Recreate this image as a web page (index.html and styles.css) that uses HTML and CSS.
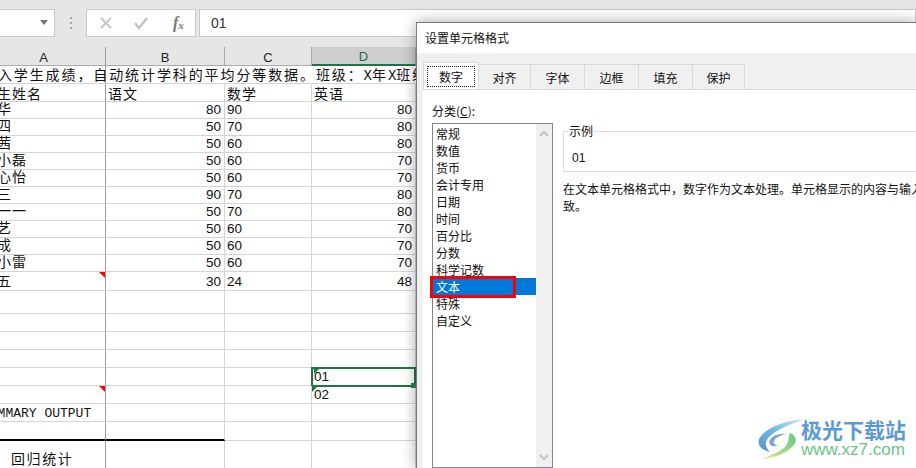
FILE: index.html
```html
<!DOCTYPE html>
<html>
<head>
    <title>设置单元格格式</title>
    <link rel="stylesheet" href="styles.css">
</head>
<body>
    <div class="toolbar">
        <div class="name-box"><span class="arrow"></span></div>
        <div class="grip"><i></i><i></i><i></i></div>
        <div class="fx-box">
            <svg class="tool-icon" width="14" height="14" viewBox="0 0 14 14"><path d="M2 2 L12 12 M12 2 L2 12" stroke="#c6c6c6" stroke-width="2" fill="none"/></svg>
            <svg class="tool-icon" width="16" height="14" viewBox="0 0 16 14"><path d="M2 7 L6 12 L14 2" stroke="#c6c6c6" stroke-width="2.6" fill="none"/></svg>
            <span class="fx">f<sub>x</sub></span>
        </div>
        <div class="formula">01</div>
    </div>

    <table class="sheet">
        <colgroup>
            <col class="col-a">
            <col class="col-b">
            <col class="col-c">
            <col class="col-d">
            <col class="col-e">
        </colgroup>
        <tr class="heads">
            <th class="first">A</th><th>B</th><th>C</th><th class="current">D</th><th></th>
        </tr>
        <tr class="h18">
            <td class="first title"><span>输入学生成绩，自动统计学科的平均分等数据。班级：<span class="tight">X</span>年<span class="tight">X</span>班级</span></td><td class="nob"></td><td class="nob"></td><td class="nob"></td><td></td>
        </tr>
        <tr class="h18"><td class="first">学生姓名</td><td>语文</td><td>数学</td><td>英语</td><td></td></tr>
        <tr class="h17"><td class="first">小华</td><td class="num">80</td><td class="int">90</td><td class="num">80</td><td></td></tr>
        <tr class="h17"><td class="first">李四</td><td class="num">50</td><td class="int">70</td><td class="num">80</td><td></td></tr>
        <tr class="h17"><td class="first">小茜</td><td class="num">50</td><td class="int">60</td><td class="num">80</td><td></td></tr>
        <tr class="h17"><td class="first">王小磊</td><td class="num">50</td><td class="int">60</td><td class="num">70</td><td></td></tr>
        <tr class="h17"><td class="first">李心怡</td><td class="num">50</td><td class="int">60</td><td class="num">70</td><td></td></tr>
        <tr class="h17"><td class="first">张三</td><td class="num">90</td><td class="int">70</td><td class="num">80</td><td></td></tr>
        <tr class="h17"><td class="first">王一一</td><td class="num">50</td><td class="int">70</td><td class="num">80</td><td></td></tr>
        <tr class="h17"><td class="first">小艺</td><td class="num">50</td><td class="int">60</td><td class="num">70</td><td></td></tr>
        <tr class="h17"><td class="first">小成</td><td class="num">50</td><td class="int">60</td><td class="num">70</td><td></td></tr>
        <tr class="h17"><td class="first">王小雷</td><td class="num">50</td><td class="int">60</td><td class="num">70</td><td></td></tr>
        <tr class="h19"><td class="first flag">王五</td><td class="num">30</td><td class="int">24</td><td class="num">48</td><td></td></tr>
        <tr class="h23"><td class="first"></td><td></td><td></td><td></td><td></td></tr>
        <tr class="h18"><td class="first"></td><td></td><td></td><td></td><td></td></tr>
        <tr class="h18"><td class="first"></td><td></td><td></td><td></td><td></td></tr>
        <tr class="h18"><td class="first"></td><td></td><td></td><td></td><td></td></tr>
        <tr class="h18"><td class="first"></td><td></td><td></td><td class="active mark">01<span class="handle"></span></td><td></td></tr>
        <tr class="h18"><td class="first flag"></td><td></td><td></td><td class="mark">02</td><td></td></tr>
        <tr class="h18"><td class="first summary">SUMMARY OUTPUT</td><td></td><td></td><td></td><td></td></tr>
        <tr class="h19"><td class="first thick"></td><td class="thick"></td><td></td><td></td><td></td></tr>
        <tr class="h29"><td class="first indent">回归统计</td><td></td><td></td><td></td><td></td></tr>
    </table>

    <div class="dialog">
        <div class="dialog-title">设置单元格格式</div>
        <div class="tabs">
            <div class="tab on"><span>数字</span></div>
            <div class="tab narrow">对齐</div>
            <div class="tab">字体</div>
            <div class="tab">边框</div>
            <div class="tab">填充</div>
            <div class="tab narrow">保护</div>
        </div>
        <div class="page">
            <div class="left-col">
                <div class="list-label">分类(<u>C</u>):</div>
                <div class="listbox">
                    <ul class="items">
                        <li>常规</li>
                        <li>数值</li>
                        <li>货币</li>
                        <li>会计专用</li>
                        <li>日期</li>
                        <li>时间</li>
                        <li>百分比</li>
                        <li>分数</li>
                        <li>科学记数</li>
                        <li class="selected">文本</li>
                        <li>特殊</li>
                        <li>自定义</li>
                    </ul>
                    <div class="scrollbar">
                        <svg width="10" height="8" viewBox="0 0 10 8"><path d="M1 6 L5 2 L9 6" stroke="#c4c4c4" stroke-width="2" fill="none"/></svg>
                        <svg width="10" height="8" viewBox="0 0 10 8"><path d="M1 2 L5 6 L9 2" stroke="#c4c4c4" stroke-width="2" fill="none"/></svg>
                    </div>
                    <div class="red-box"></div>
                </div>
            </div>
            <div class="right-col">
                <fieldset class="sample">
                    <legend>示例</legend>
                    <div class="sample-value">01</div>
                </fieldset>
                <p class="desc">在文本单元格格式中，数字作为文本处理。单元格显示的内容与输入的内容完全一致。</p>
            </div>
        </div>
    </div>

    <div class="watermark">
        <svg class="wm-logo" width="60" height="55" viewBox="0 0 180 165">
            <defs>
                <linearGradient id="wmBlue" x1="1" y1="0" x2="0" y2="1">
                    <stop offset="0" stop-color="#dcecf8"/>
                    <stop offset="0.5" stop-color="#6db9e8"/>
                    <stop offset="1" stop-color="#5a92c8"/>
                </linearGradient>
                <linearGradient id="wmGreen" x1="1" y1="0" x2="0" y2="1">
                    <stop offset="0" stop-color="#62c98c"/>
                    <stop offset="0.6" stop-color="#a4dc80"/>
                    <stop offset="1" stop-color="#f2ec9a"/>
                </linearGradient>
            </defs>
            <path d="M165 27 C110 30 50 50 28 85 C20 105 35 122 60 125 C45 112 42 95 60 78 C85 55 130 40 165 27Z" fill="url(#wmBlue)"/>
            <path d="M120 68 C140 78 145 95 125 112 C100 135 65 145 35 147 C75 130 105 120 112 100 C118 88 115 78 120 68Z" fill="url(#wmGreen)"/>
            <path d="M108 72 C85 68 60 80 58 95 C57 108 72 112 85 105 C75 105 68 100 72 92 C78 82 95 75 108 72Z" fill="#7fa6c9"/>
        </svg>
        <div class="wm-text">
            <div class="wm-name">极光下载站</div>
            <div class="wm-url">www.xz7.com</div>
        </div>
    </div>
</body>
</html>
```

FILE: styles.css
```css
html, body {
    margin: 0;
    padding: 0;
    height: 468px;
    overflow: hidden;
    background: #fff;
    color: #111;
    font-family: "Noto Sans CJK SC", "Liberation Sans", sans-serif;
    font-size: 12px;
}

body {
    position: relative;
    width: 916px;
}

/* formula bar */
.toolbar {
    display: flex;
    align-items: center;
    height: 47px;
    padding-bottom: 2px;
    box-sizing: border-box;
    background: #e6e6e6;
}

.name-box {
    display: flex;
    align-items: center;
    justify-content: flex-end;
    width: 55px;
    height: 28px;
    padding-right: 6px;
    box-sizing: border-box;
    background: #fff;
    border: 1px solid #c8c8c8;
    border-left: none;
}

.arrow {
    border-left: 4px solid transparent;
    border-right: 4px solid transparent;
    border-top: 5px solid #777;
}

.grip {
    display: flex;
    flex-direction: column;
    gap: 3px;
    margin: 0 14px 0 15px;
}

.grip i {
    display: block;
    width: 2px;
    height: 2px;
    background: #a8a8a8;
}

.fx-box {
    display: flex;
    align-items: center;
    width: 110px;
    height: 28px;
    box-sizing: border-box;
    padding-left: 12px;
    gap: 20px;
    background: #fff;
    border: 1px solid #c8c8c8;
}

.fx {
    margin-left: 4px;
    font-family: "Liberation Serif", serif;
    font-style: italic;
    font-size: 16px;
    font-weight: bold;
    color: #777;
}

.fx sub {
    font-size: 11px;
    vertical-align: -1px;
    line-height: 0;
}

.formula {
    flex: 1;
    height: 28px;
    margin-left: 3px;
    padding-left: 11px;
    box-sizing: border-box;
    line-height: 26px;
    font-family: "Liberation Sans", sans-serif;
    font-size: 14px;
    color: #333;
    background: #fff;
    border: 1px solid #c8c8c8;
}

/* sheet */
.sheet {
    table-layout: fixed;
    width: 523px;
    margin-left: -23px;
    border-collapse: separate;
    border-spacing: 0;
    font-family: "Liberation Mono", "Noto Sans CJK SC", monospace;
}

.col-a { width: 129px; }
.col-b { width: 119px; }
.col-c { width: 87px; }
.col-d { width: 104px; }
.col-e { width: 84px; }

.sheet th, .sheet td {
    box-sizing: border-box;
    border-right: 1px solid #d4d4d4;
    border-bottom: 1px solid #d4d4d4;
    white-space: nowrap;
    font-weight: normal;
    position: relative;
}

.sheet td {
    padding: 0 0 0 2px;
    vertical-align: bottom;
    line-height: 11px;
    font-size: 14px;
    letter-spacing: 1px;
}

.sheet th {
    height: 18px;
    padding: 2px 0 0;
    line-height: 15px;
    background: #e6e6e6;
    font-family: "Liberation Sans", sans-serif;
    font-size: 13px;
    color: #222;
    border-right-color: #a8a8a8;
    border-bottom-color: #ababab;
}

.sheet th.current {
    background: #cfcfcf;
    color: #1f6b43;
    border-bottom: 2px solid #217346;
}

.h17 td { height: 17px; padding-bottom: 2px; }
.h18 td { height: 18px; }
.h19 td { height: 19px; padding-bottom: 2px; }
.h23 td { height: 23px; }
.h29 td { height: 29px; }

.sheet .first {
    padding-left: 5px;
    border-right-color: #9e9e9e;
}

.sheet .title {
    overflow: visible;
    padding-bottom: 1px;
    letter-spacing: 1.9px;
}

.title .tight {
    letter-spacing: 0;
}

.sheet .nob {
    border-right-color: transparent;
}

.sheet .num, .sheet .int, .sheet .mark {
    padding-bottom: 3px;
    font-family: "Liberation Sans", sans-serif;
    font-size: 13.5px;
    letter-spacing: 0;
}

.sheet .num {
    padding-right: 3px;
    text-align: right;
}

.sheet .summary {
    padding-left: 5px;
    padding-bottom: 2px;
    font-size: 13px;
    letter-spacing: 0;
}

.sheet .thick {
    border-bottom: 2px solid #000;
}

.sheet .indent {
    padding-left: 34px;
    padding-top: 14px;
    vertical-align: top;
    letter-spacing: 1.6px;
}

.flag::after {
    content: "";
    position: absolute;
    right: 0;
    top: 0;
    border-top: 6px solid #f00;
    border-left: 6px solid transparent;
}

.mark::before {
    content: "";
    position: absolute;
    left: 0;
    top: 0;
    border-top: 6px solid #1e7a34;
    border-right: 6px solid transparent;
}

.active::before {
    left: 2px;
    top: 1px;
    border-top-width: 5px;
    border-right-width: 5px;
}

.active::after {
    content: "";
    position: absolute;
    left: -1px;
    top: -1px;
    right: -1px;
    bottom: -2px;
    border: 2px solid #217346;
}

.handle {
    position: absolute;
    right: -1px;
    bottom: -3px;
    width: 5px;
    height: 5px;
    background: #217346;
    z-index: 1;
}

/* dialog */
.dialog {
    position: absolute;
    left: 416px;
    top: 22px;
    width: 500px;
    height: 446px;
    box-sizing: border-box;
    display: flex;
    flex-direction: column;
    overflow: hidden;
    background: #f0f0f0;
    border-top: 1px solid #7a7a7a;
    border-left: 1px solid #7a7a7a;
    box-shadow: 0 0 14px rgba(0, 0, 0, 0.35);
}

.dialog-title {
    height: 30px;
    flex: none;
    padding-left: 8px;
    line-height: 29px;
    background: #fff;
}

.tabs {
    display: flex;
    align-items: flex-end;
    height: 36px;
    flex: none;
    padding-left: 6px;
}

.tab {
    width: 54px;
    height: 25px;
    box-sizing: border-box;
    line-height: 25px;
    text-align: center;
    background: #f0f0f0;
    border: 1px solid #d9d9d9;
    border-left: none;
    border-bottom: none;
}

.tab.narrow {
    width: 52px;
}

.tab.on {
    width: 56px;
    height: 27px;
    padding: 3px;
    line-height: 19px;
    background: #fff;
    border-left: 1px solid #d9d9d9;
}

.tab.on span {
    display: block;
    height: 21px;
    box-sizing: border-box;
    border: 1px dotted #222;
}

.page {
    flex: 1;
    display: flex;
    margin-left: 6px;
    background: #fff;
    border-top: 1px solid #d9d9d9;
}

.left-col {
    width: 121px;
    flex: none;
    margin-left: 9px;
    padding-top: 12px;
}

.list-label {
    height: 17px;
    line-height: 17px;
}

.listbox {
    position: relative;
    display: flex;
    height: 345px;
    margin-top: 4px;
    box-sizing: border-box;
    border: 1px solid #828790;
}

.items {
    flex: 1;
    margin: 0;
    padding: 1px 0 0;
    list-style: none;
}

.items li {
    height: 17px;
    padding-left: 3px;
    line-height: 17px;
}

.items .selected {
    background: #0078d7;
    color: #fff;
}

.scrollbar {
    display: flex;
    flex-direction: column;
    justify-content: space-between;
    align-items: center;
    width: 16px;
    padding: 6px 0;
    box-sizing: border-box;
    background: #f0f0f0;
}

.red-box {
    position: absolute;
    left: -3px;
    top: 152px;
    width: 86px;
    height: 22px;
    box-sizing: border-box;
    border: 3px solid #f00;
}

.right-col {
    width: 436px;
    flex: none;
    margin-left: 10px;
    padding-top: 33px;
}

.sample {
    margin: 0;
    padding: 0 8px;
    height: 49px;
    box-sizing: border-box;
    border: 1px solid #dcdcdc;
}

.sample legend {
    margin-left: -4px;
    padding: 0 1px;
    line-height: 16px;
}

.sample-value {
    padding-top: 11px;
    line-height: 17px;
    font-family: "Liberation Sans", sans-serif;
    font-size: 12px;
}

.desc {
    margin: 8px 0 0;
    line-height: 17px;
}

/* watermark */
.watermark {
    position: absolute;
    left: 750px;
    top: 410px;
    display: flex;
    align-items: flex-start;
}

.wm-logo {
    margin-right: -9px;
}

.wm-text {
    padding-top: 7px;
}

.wm-name {
    font-size: 21px;
    font-weight: bold;
    line-height: 24px;
    color: #5b9bd5;
}

.wm-url {
    font-family: "Liberation Sans", sans-serif;
    font-size: 17px;
    line-height: 18px;
    color: #6cc48a;
}
```
